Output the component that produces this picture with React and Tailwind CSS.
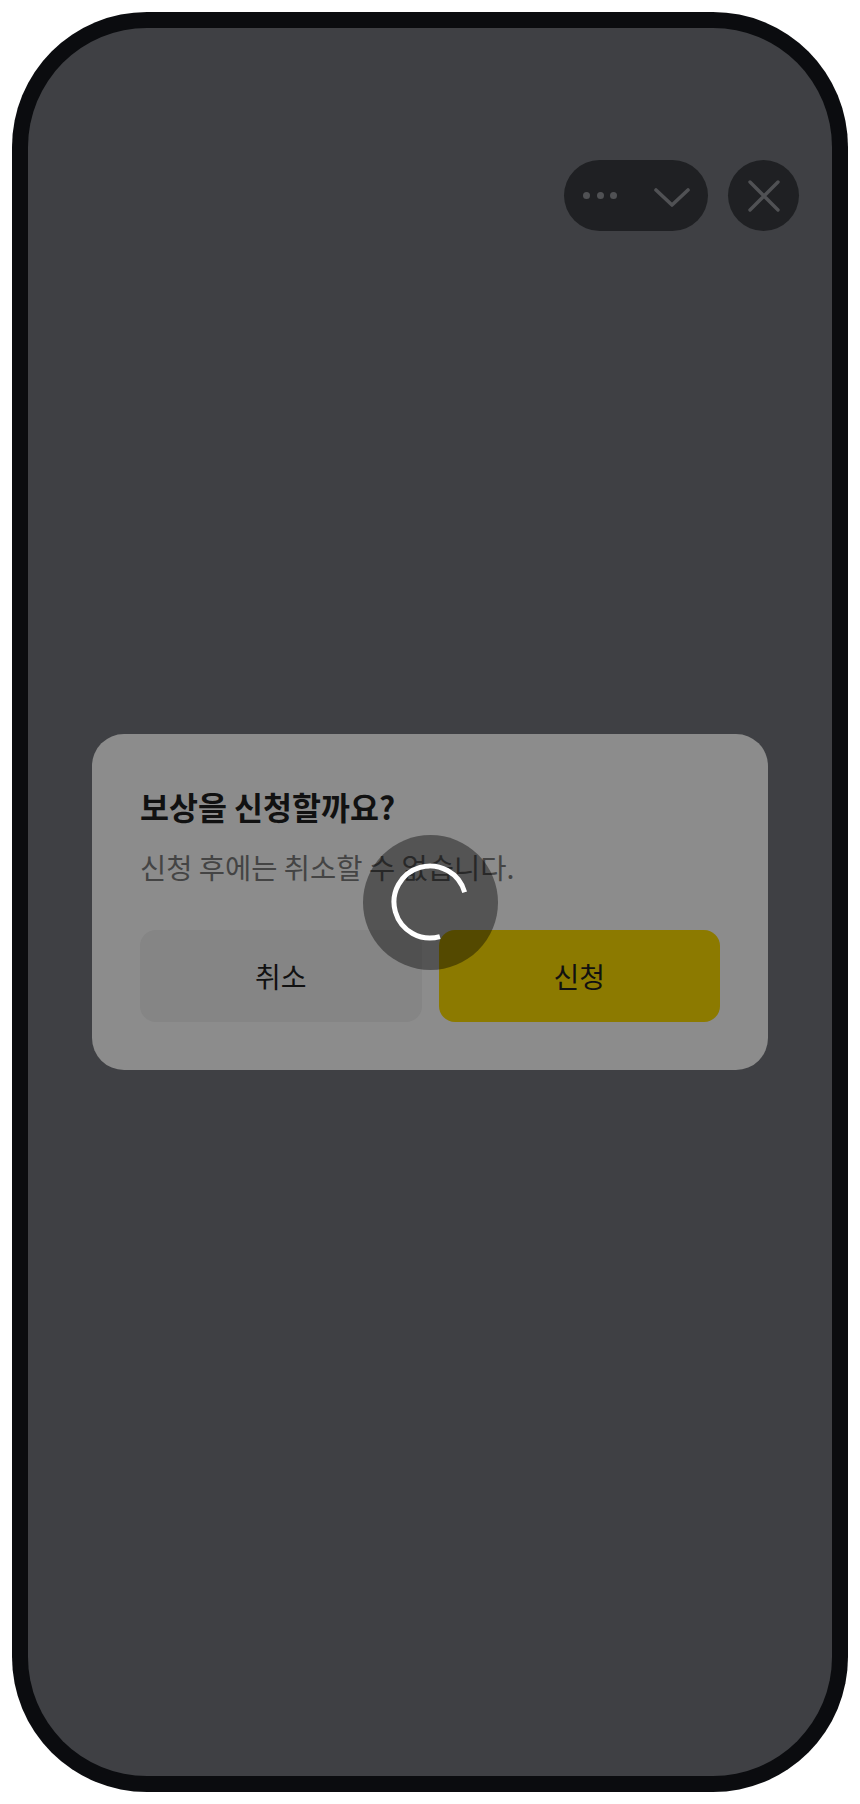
export default function App() {
  return (
    <div
      className="w-[860px] h-[1804px] bg-white p-3"
      style={{ fontFamily: '"Noto Sans CJK KR", "Noto Sans", sans-serif' }}
    >
      <div className="h-full rounded-[135px] bg-[#0b0c0f] p-4">
        <div className="relative h-full rounded-[119px] bg-[#3f4044] flex items-center justify-center px-16">
          {/* mini-app capsule */}
          <div className="absolute top-[132px] right-[33px] flex items-center gap-5">
            <button className="w-[144px] h-[71px] rounded-full bg-[#1f2023] flex items-center justify-between pl-[19px] pr-[18px]">
              <span className="flex items-center gap-[6.5px]">
                <span className="w-[7px] h-[7px] rounded-full bg-[#505154]" />
                <span className="w-[7px] h-[7px] rounded-full bg-[#505154]" />
                <span className="w-[7px] h-[7px] rounded-full bg-[#505154]" />
              </span>
              <svg className="mt-1" width="36" height="20" viewBox="0 0 36 20" fill="none">
                <path d="M2 2 L18 17 L34 2" stroke="#505154" strokeWidth="3.6" strokeLinecap="round" strokeLinejoin="round" />
              </svg>
            </button>
            <button className="w-[71px] h-[71px] rounded-full bg-[#1f2023] flex items-center justify-center">
              <svg width="32" height="32" viewBox="0 0 32 32" fill="none">
                <path d="M2 2 L30 30 M30 2 L2 30" stroke="#505154" strokeWidth="3.4" strokeLinecap="round" />
              </svg>
            </button>
          </div>

          {/* dialog */}
          <div className="w-full rounded-[32px] bg-[#8c8c8c] px-12 pt-12 pb-12">
            <h2 className="text-[31.5px] leading-[48px] font-bold text-[#111111]">보상을 신청할까요?</h2>
            <p className="mt-4 text-[28.5px] leading-[42px] text-[#444444]">신청 후에는 취소할 수 없습니다.</p>
            <div className="mt-[42px] flex gap-[17px]">
              <button className="flex-1 h-[92px] rounded-[16px] bg-[#858585] text-[28px] text-[#111111]">취소</button>
              <button className="flex-1 h-[92px] rounded-[16px] bg-[#8c7a00] text-[28px] text-[#111111]">신청</button>
            </div>
          </div>

          {/* loading overlay */}
          <div className="absolute inset-0 flex items-center justify-center pointer-events-none">
            <div className="w-[135px] h-[135px] rounded-full bg-black/40 flex items-center justify-center">
              <svg width="82" height="82" viewBox="0 0 82 82" fill="none">
                <circle
                  cx="41"
                  cy="41"
                  r="36"
                  stroke="white"
                  strokeWidth="5"
                  strokeDasharray="169.6 226.2"
                  transform="rotate(74 41 41)"
                />
              </svg>
            </div>
          </div>
        </div>
      </div>
    </div>
  );
}
